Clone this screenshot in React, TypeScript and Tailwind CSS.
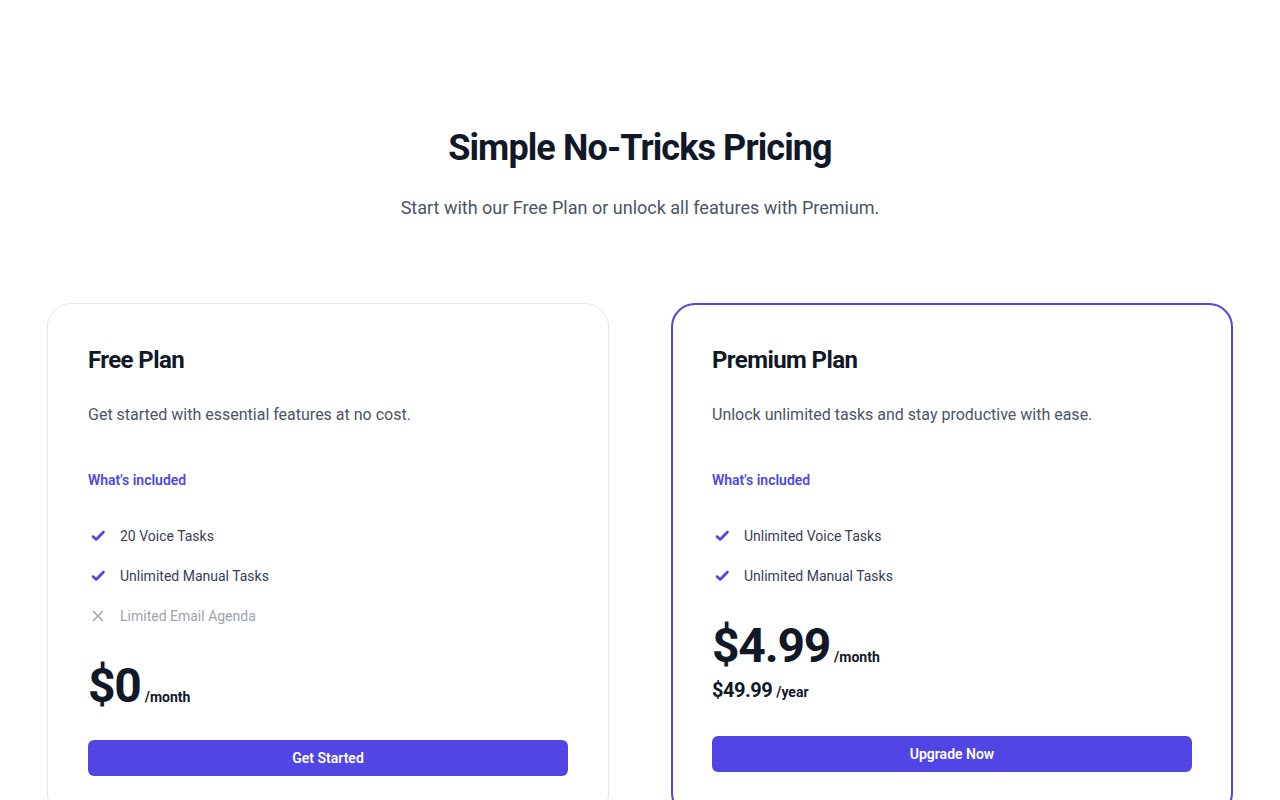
import React from 'react';

type Feature = { label: string; included: boolean };

interface PlanCardProps {
  title: string;
  description: string;
  features: Feature[];
  price: string;
  yearly?: string;
  cta: string;
  highlighted?: boolean;
}

function CheckIcon() {
  return (
    <svg
      viewBox="0 0 20 20"
      fill="none"
      stroke="currentColor"
      strokeWidth={2.6}
      strokeLinecap="round"
      strokeLinejoin="round"
      className="h-5 w-5 flex-none text-[#4f46e5]"
      aria-hidden="true"
    >
      <path d="M5 10.5l3.2 3L15.5 6" />
    </svg>
  );
}

function XIcon() {
  return (
    <svg
      viewBox="0 0 20 20"
      fill="none"
      stroke="currentColor"
      strokeWidth={1.5}
      strokeLinecap="round"
      className="h-5 w-5 flex-none text-[#9ca3af]"
      aria-hidden="true"
    >
      <path d="M5.5 5.5l9 9M14.5 5.5l-9 9" />
    </svg>
  );
}

function PlanCard({ title, description, features, price, yearly, cta, highlighted }: PlanCardProps) {
  return (
    <div
      className={
        highlighted
          ? 'rounded-3xl border-2 border-[#4f46e5] bg-white p-[39px]'
          : 'rounded-3xl border border-[#e5e7eb] bg-white p-10'
      }
    >
      <h3 className="text-2xl leading-8 font-bold tracking-tight text-[#111827]">{title}</h3>
      <p className="mt-[25px] text-base leading-7 text-[#4b5563]">{description}</p>

      <h4 className="mt-[39px] text-sm leading-6 font-semibold text-[#4f46e5]">What's included</h4>
      <ul className="mt-8 space-y-4 text-sm leading-6 text-[#374151]">
        {features.map((f) => (
          <li
            key={f.label}
            className={f.included ? 'flex items-center gap-3' : 'flex items-center gap-3 text-[#9ca3af]'}
          >
            {f.included ? <CheckIcon /> : <XIcon />}
            {f.label}
          </li>
        ))}
      </ul>

      <p className="mt-[34px] flex items-baseline gap-x-1">
        <span className="text-5xl leading-none font-bold tracking-tight text-[#111827]">{price}</span>
        <span className="text-sm leading-6 font-bold text-[#111827]">/month</span>
      </p>
      {yearly && (
        <p className="mt-1.5 flex items-baseline gap-x-1">
          <span className="text-xl leading-7 font-bold tracking-tight text-[#111827]">{yearly}</span>
          <span className="text-sm leading-6 font-bold text-[#111827]">/year</span>
        </p>
      )}

      <button
        className={
          (yearly ? 'mt-8' : 'mt-[30px]') +
          ' block w-full rounded-md bg-[#4f46e5] px-3 py-2 text-center text-sm leading-5 font-semibold text-white'
        }
      >
        {cta}
      </button>
    </div>
  );
}

export default function App() {
  return (
    <div className="min-h-screen bg-white" style={{ fontFamily: 'Roboto, "Liberation Sans", sans-serif' }}>
      <div className="px-[47px] pt-32 pb-16">
        <div className="text-center">
          <h2 className="text-4xl leading-10 font-bold tracking-tight text-[#111827]">Simple No-Tricks Pricing</h2>
          <p className="mt-6 text-lg leading-8 text-[#4b5563]">
            Start with our Free Plan or unlock all features with Premium.
          </p>
        </div>

        <div className="mt-[79px] grid grid-cols-2 gap-[62px]">
          <PlanCard
            title="Free Plan"
            description="Get started with essential features at no cost."
            features={[
              { label: '20 Voice Tasks', included: true },
              { label: 'Unlimited Manual Tasks', included: true },
              { label: 'Limited Email Agenda', included: false },
            ]}
            price="$0"
            cta="Get Started"
          />
          <PlanCard
            highlighted
            title="Premium Plan"
            description="Unlock unlimited tasks and stay productive with ease."
            features={[
              { label: 'Unlimited Voice Tasks', included: true },
              { label: 'Unlimited Manual Tasks', included: true },
            ]}
            price="$4.99"
            yearly="$49.99"
            cta="Upgrade Now"
          />
        </div>
      </div>
    </div>
  );
}
